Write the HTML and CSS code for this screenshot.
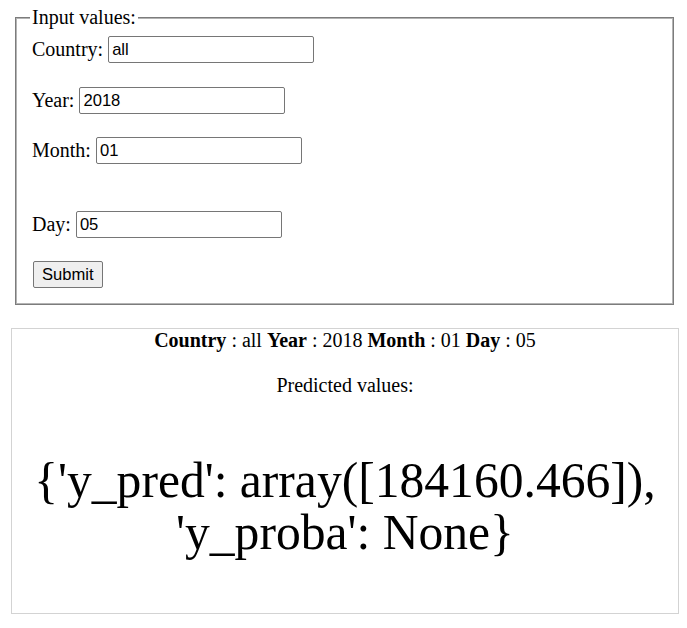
FILE: index.html
```html
<!DOCTYPE html>
<html>
<head>
<meta charset="utf-8">
<link rel="stylesheet" href="styles.css">
</head>
<body>
<form class="form">
  <fieldset class="box">
    <legend class="legend">Input values:</legend>
    <div class="row row-first"><label class="lbl">Country:</label><input class="field" type="text" value="all"></div>
    <div class="row"><label class="lbl">Year:</label><input class="field" type="text" value="2018"></div>
    <div class="row row-wide"><label class="lbl">Month:</label><input class="field" type="text" value="01"></div>
    <div class="row"><label class="lbl">Day:</label><input class="field" type="text" value="05"></div>
    <div class="row"><button class="btn" type="button">Submit</button></div>
  </fieldset>
</form>
<div class="result">
  <div class="summary"><b>Country</b> : all <b>Year</b> : 2018 <b>Month</b> : 01 <b>Day</b> : 05</div>
  <p class="caption">Predicted values:</p>
  <p class="big">{'y_pred': array([184160.466]), 'y_proba': None}</p>
</div>
</body>
</html>
```

FILE: styles.css
```css
html, body {
  background: #fff;
}
body {
  margin: 0;
  padding: 0 8px 0 11px;
  font-family: "Liberation Serif", "Times New Roman", serif;
  font-size: 20px;
  color: #000;
}
.form {
  margin: 0;
  padding: 6px 5px 0 4px;
}
.box {
  margin: 0;
  border: 1px solid #7c7c7c;
  box-shadow: inset 0 0 0 1px #b4b4b4;
  padding: 7px 16px 16px 16px;
  display: flex;
  flex-direction: column;
  gap: 23px;
}
.legend {
  padding: 0 2px;
  margin-left: -2px;
  line-height: 23px;
  background: #fff;
}
.row {
  display: flex;
  align-items: center;
  gap: 5px;
  height: 27px;
}
.row-first {
  margin-bottom: 1px;
}
.row-wide {
  margin-bottom: 24px;
}
.lbl {
  line-height: 23px;
}
.field {
  box-sizing: border-box;
  width: 206px;
  height: 27px;
  margin: 0;
  padding: 1px 3px;
  border: 1px solid #767676;
  border-radius: 2px;
  font-family: "Liberation Sans", Arial, sans-serif;
  font-size: 16.6px;
  color: #000;
  background: #fff;
}
.btn {
  box-sizing: border-box;
  height: 27px;
  margin: 0 0 0 1px;
  padding: 1px 8px;
  border: 1px solid #767676;
  border-radius: 2px;
  background: #efefef;
  font-family: "Liberation Sans", Arial, sans-serif;
  font-size: 16.6px;
  color: #000;
}
.result {
  margin-top: 23px;
  border: 1px solid #d3d3d3;
  height: 284px;
  text-align: center;
}
.summary {
  line-height: 23px;
}
.caption {
  margin: 22px 0 0 0;
  line-height: 23px;
}
.big {
  margin: 58px 0 0 0;
  font-size: 49.6px;
  line-height: 52px;
}
```
